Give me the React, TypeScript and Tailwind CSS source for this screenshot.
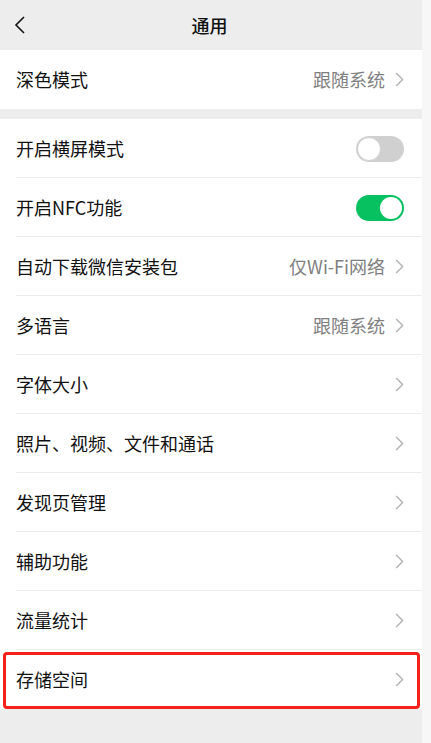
import React from "react";

const Chevron = () => (
  <svg width="9" height="15" viewBox="0 0 9 15" className="ml-[10px] shrink-0">
    <path d="M1.2 1 L7.6 7.5 L1.2 14" fill="none" stroke="#b2b2b2" strokeWidth="1.4" />
  </svg>
);

const Toggle = ({ on }: { on: boolean }) =>
  on ? (
    <div className="w-[48px] h-[26px] rounded-full bg-[#07c160] flex items-center justify-end pr-[2px]">
      <div className="w-[22px] h-[22px] rounded-full bg-white" />
    </div>
  ) : (
    <div className="w-[48px] h-[26px] rounded-full bg-[#d0d0d0] flex items-center pl-[1px]">
      <div className="w-[24px] h-[24px] rounded-full bg-white border border-[#d0d0d0]" />
    </div>
  );

type Row = { label: string; value?: string; toggle?: boolean; highlight?: boolean };

const rows: Row[] = [
  { label: "开启横屏模式", toggle: false },
  { label: "开启NFC功能", toggle: true },
  { label: "自动下载微信安装包", value: "仅Wi-Fi网络" },
  { label: "多语言", value: "跟随系统" },
  { label: "字体大小" },
  { label: "照片、视频、文件和通话" },
  { label: "发现页管理" },
  { label: "辅助功能" },
  { label: "流量统计" },
  { label: "存储空间", highlight: true },
];

const Item = ({ row, last }: { row: Row; last?: boolean }) => (
  <div className="relative h-[59px] pl-4 flex items-center">
    <div className="flex-1 h-full flex items-center pr-[18px]">
      <span className="flex-1 text-[18px] text-[#111]">{row.label}</span>
      {row.value && <span className="text-[18px] text-[#808080]">{row.value}</span>}
      {row.toggle === undefined ? <Chevron /> : <Toggle on={row.toggle} />}
    </div>
    {!last && <div className="absolute left-4 right-0 bottom-0 h-px bg-[#ececec]" />}
    {row.highlight && (
      <div className="absolute left-[3px] right-[2px] top-[2px] bottom-0 border-[3px] border-[#f5221b] rounded-[4px]" />
    )}
  </div>
);

export default function App() {
  return (
    <div
      className="w-[431px] h-[743px] flex overflow-hidden"
      style={{ fontFamily: '"Noto Sans CJK SC", "Noto Sans", sans-serif' }}
    >
      <div className="w-[422px] bg-[#ededed] flex flex-col">
        <div className="h-[50px] grid grid-cols-[1fr_auto_1fr] items-center">
          <svg width="14" height="20" viewBox="0 0 14 20" className="ml-[13px]">
            <path d="M11 2 L3 10 L11 18" fill="none" stroke="#111" strokeWidth="1.6" />
          </svg>
          <span className="text-[18px] font-medium text-[#111] -ml-[3px]">通用</span>
          <div />
        </div>
        <div className="bg-white">
          <Item row={{ label: "深色模式", value: "跟随系统" }} last />
        </div>
        <div className="h-[10px]" />
        <div className="bg-white">
          {rows.map((r, i) => (
            <Item key={r.label} row={r} last={i === rows.length - 1} />
          ))}
        </div>
      </div>
      <div className="w-[9px] bg-[#f7f7f7]" />
    </div>
  );
}
